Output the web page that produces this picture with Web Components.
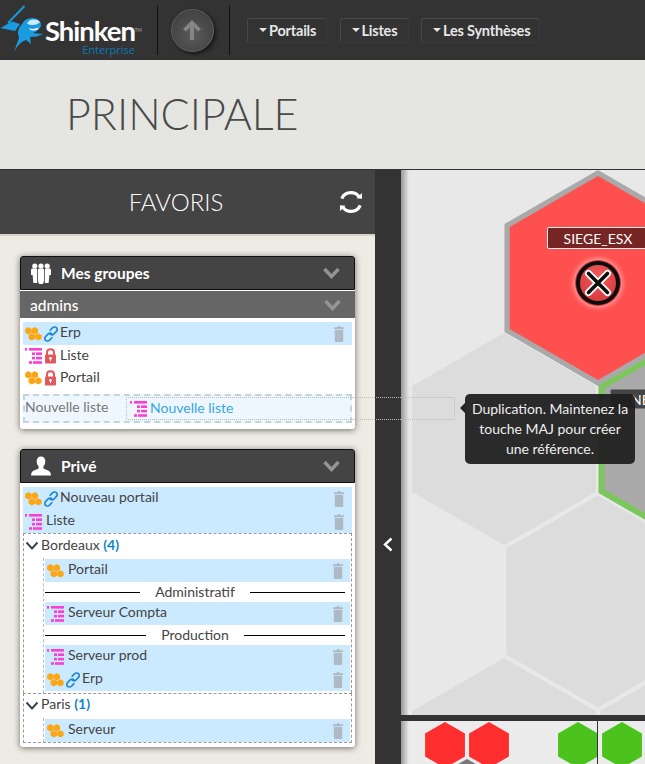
<!DOCTYPE html>
<html lang="fr">
<head>
<meta charset="utf-8">
<title>Shinken Enterprise</title>
<style>
    html, body { margin: 0; padding: 0; }
    body {
        width: 645px;
        height: 764px;
        overflow: hidden;
        position: relative;
        font-family: 'Lato', sans-serif;
        background: #333;
    }
</style>
</head>
<body>
<sk-topbar>
    <sk-nav-button width="80">Portails</sk-nav-button>
    <sk-nav-button width="69">Listes</sk-nav-button>
    <sk-nav-button width="119">Les Synthèses</sk-nav-button>
</sk-topbar>
<sk-title-band>PRINCIPALE</sk-title-band>
<sk-main>
    <sk-sidebar>
        <sk-panel title="Mes groupes" icon="group">
            <sk-subheader>admins</sk-subheader>
            <sk-list>
                <sk-item icons="portal link" selected trash>Erp</sk-item>
                <sk-item icons="list lock" short>Liste</sk-item>
                <sk-item icons="portal lock" short>Portail</sk-item>
                <sk-dropzone>Nouvelle liste</sk-dropzone>
            </sk-list>
        </sk-panel>
        <sk-panel title="Privé" icon="user">
            <sk-list>
                <sk-item icons="portal link" selected trash>Nouveau portail</sk-item>
                <sk-item icons="list" selected trash>Liste</sk-item>
                <sk-folder name="Bordeaux" count="4">
                    <sk-item icons="portal" selected trash nested>Portail</sk-item>
                    <sk-sep>Administratif</sk-sep>
                    <sk-item icons="list" selected trash nested>Serveur Compta</sk-item>
                    <sk-sep>Production</sk-sep>
                    <sk-item icons="list" selected trash nested>Serveur prod</sk-item>
                    <sk-item icons="portal link" selected trash nested>Erp</sk-item>
                </sk-folder>
                <sk-folder name="Paris" count="1">
                    <sk-item icons="portal" selected trash nested>Serveur</sk-item>
                </sk-folder>
            </sk-list>
        </sk-panel>
    </sk-sidebar>
    <sk-collapse-strip></sk-collapse-strip>
    <sk-map></sk-map>
</sk-main>
<sk-drag-ghost>Nouvelle liste</sk-drag-ghost>
<sk-tooltip>Duplication. Maintenez la touche MAJ pour créer une référence.</sk-tooltip>

<script>
function hexPoints(cx, cy, r) {
    const w = r * 0.866;
    return [[cx, cy - r], [cx + w, cy - r / 2], [cx + w, cy + r / 2], [cx, cy + r], [cx - w, cy + r / 2], [cx - w, cy - r / 2]]
        .map(p => p.join(',')).join(' ');
}

const ICONS = {
    portal: `<svg width="17" height="14" viewBox="0 0 17 14"><g fill="#fda614">${[[3.4, 3.8], [9.8, 3.8], [6.8, 9.9], [13.4, 9.9]].map(([x, y]) => `<polygon points="${hexPoints(x, y, 3.7)}"/>`).join('')}</g></svg>`,
    link: `<svg class="second" width="14" height="16" viewBox="0 0 14 16"><g fill="none" stroke="#1f8ad2" stroke-width="1.7" stroke-linecap="round"><path d="M6.2 4.3 L8.4 1.9 C9.7 .6 11.6 .8 12.6 1.9 C13.5 3 13.3 4.6 12.2 5.7 L9.8 8.1 C8.6 9.2 7 9 6.1 7.9"/><path d="M7.8 11.7 L5.6 14.1 C4.3 15.4 2.4 15.2 1.4 14.1 C.5 13 .7 11.4 1.8 10.3 L4.2 7.9 C5.4 6.8 7 7 7.9 8.1"/></g></svg>`,
    list: `<svg width="17" height="16" viewBox="0 0 17 16"><g fill="#fb3fd6"><rect x="0" y="0" width="2" height="2.6"/><rect x="4" y="0" width="13" height="2.6"/><rect x="7" y="4.4" width="3" height="2.6"/><rect x="11" y="4.4" width="6" height="2.6"/><rect x="7" y="8.8" width="3" height="2.6"/><rect x="11" y="8.8" width="6" height="2.6"/><rect x="4" y="13.2" width="3" height="2.6"/><rect x="8" y="13.2" width="9" height="2.6"/></g></svg>`,
    lock: `<svg class="second" width="14" height="16" viewBox="0 0 14 16"><path d="M3 7 V4.6 C3 2.4 4.4 1.2 6.5 1.2 C8.6 1.2 10 2.4 10 4.6 V7" fill="none" stroke="#e2585f" stroke-width="2"/><rect x="1" y="6.5" width="11" height="9" rx="1" fill="#e2585f"/><circle cx="6.5" cy="10.2" r="1.3" fill="#fff"/><rect x="6" y="10.4" width="1" height="2.6" fill="#fff"/></svg>`,
    trash: `<svg width="10" height="16" viewBox="0 0 10 16"><path d="M3.5 1.2 L4 0 H6 L6.5 1.2 H10 V3 H0 V1.2 Z M.8 3.8 H9.2 V15 Q9.2 16 8.2 16 H1.8 Q.8 16 .8 15 Z" fill="#adbac3"/></svg>`,
    chevron: `<svg width="17" height="12" viewBox="0 0 17 12"><path d="M1.5 2 L8.5 9.5 L15.5 2" fill="none" stroke="#949494" stroke-width="3.4"/></svg>`,
    group: `<svg width="20" height="21" viewBox="0 0 20 21" fill="#fff"><circle cx="3.8" cy="3" r="2.6"/><circle cx="10" cy="3" r="2.6"/><circle cx="16.2" cy="3" r="2.6"/><path d="M0 7 Q0 5.6 1.8 5.6 H5.4 L6.2 6.4 V20 H2.4 L1.6 12 H0 Z"/><path d="M7 6.2 Q7.6 5.6 8.6 5.6 H11.4 Q12.4 5.6 13 6.2 V18 L12 21 H8 L7 18 Z"/><path d="M20 7 Q20 5.6 18.2 5.6 H14.6 L13.8 6.4 V20 H17.6 L18.4 12 H20 Z"/></svg>`,
    user: `<svg width="21" height="20" viewBox="0 0 21 20" fill="#fff"><path d="M10.5 0 C13.6 0 15 2.2 15 5 C15 7.6 14 9.4 13 10.6 V12 C13.4 13 15.4 13.6 17.4 14.4 C19.6 15.2 20.8 16.4 21 20 H0 C.2 16.4 1.4 15.2 3.6 14.4 C5.6 13.6 7.6 13 8 12 V10.6 C7 9.4 6 7.6 6 5 C6 2.2 7.4 0 10.5 0 Z"/></svg>`,
    refresh: `<svg width="24" height="24" viewBox="0 0 24 24" fill="none" stroke="#fff" stroke-width="3.2"><path d="M2.8 8.6 C4.4 4.6 8 2.6 12 2.6 C15.4 2.6 18.4 4.2 20 6.6"/><path d="M21.2 15.4 C19.6 19.4 16 21.4 12 21.4 C8.6 21.4 5.6 19.8 4 17.4"/><path d="M17.4 8.2 L23 8.8 L23 3 Z" fill="#fff" stroke="none"/><path d="M6.6 15.8 L1 15.2 L1 21 Z" fill="#fff" stroke="none"/></svg>`
};

class SkTopbar extends HTMLElement {
    constructor() {
        super();
        this.attachShadow({ mode: 'open' });
    }
    connectedCallback() {
        this.shadowRoot.innerHTML = `
            <style>
                :host { display: flex; height: 60px; background: #333; align-items: center; }
                .logo { display: flex; width: 157px; height: 60px; flex: none; }
                .brand { display: flex; flex-direction: column; align-items: flex-end; width: 89px; padding-top: 19px; position: relative; }
                .name { font: 700 27.5px/24px 'Lato', sans-serif; color: #fff; letter-spacing: -1px; }
                .tm { font: 400 5px/6px 'Lato', sans-serif; color: #aaa; position: absolute; right: -7px; top: 27px; }
                .ent { font: 400 11px/12px 'Open Sans', sans-serif; color: #0d78b5; margin-top: 1px; }
                .sep { width: 1px; height: 50px; background: #111; flex: none; }
                .up { width: 71px; display: flex; justify-content: center; flex: none; }
                .circle {
                    width: 41px; height: 41px; border-radius: 50%; margin-right: 3px;
                    background: radial-gradient(circle at 50% 60%, #5a5a5a, #474747 60%, #3b3b3b);
                    border: 1px solid #5e5e5e;
                    box-shadow: 2px 2px 4px rgba(0,0,0,.6);
                    display: flex; align-items: center; justify-content: center;
                }
                nav { display: flex; gap: 12.5px; margin-left: 17px; }
            </style>
            <div class="logo">
                <svg width="46" height="60" viewBox="0 0 46 60">
                    <path d="M24.5 6 L8 23" stroke="#1a9be0" stroke-width="1.8"/>
                    <path d="M.5 28 L12 21.5 L20 24 L15 31 Z" fill="#1a9be0"/>
                    <path d="M14 52 L19 38 Q16 30 22 24 Q25 18 32 18 Q41 18 41 26 Q39 31 33 33 L43 34 L37 36.5 L30 37 L31 44 L26 40 Q19 42 14 52 Z" fill="#1a9be0"/>
                    <path d="M27 23.5 Q33 27 40 22.5 Q38.5 19.5 33.5 19.5 Q29 19.5 27 23.5 Z" fill="#cdeafa"/>
                    <path d="M29 28 Q33 30 38.5 27.5 L37.8 29.6 Q33 31.2 30 29.8 Z" fill="#fff"/>
                </svg>
                <div class="brand">
                    <span class="name">Shinken</span>
                    <span class="tm">TM</span>
                    <span class="ent">Enterprise</span>
                </div>
            </div>
            <div class="sep"></div>
            <div class="up">
                <div class="circle">
                    <svg width="20" height="22" viewBox="0 0 20 22"><path d="M10 1 L19 10 L16 12.6 L12 8.6 V21 H8 V8.6 L4 12.6 L1 10 Z" fill="#858585"/></svg>
                </div>
            </div>
            <div class="sep"></div>
            <nav><slot></slot></nav>
        `;
    }
}

class SkNavButton extends HTMLElement {
    constructor() {
        super();
        this.attachShadow({ mode: 'open' });
    }
    connectedCallback() {
        this.shadowRoot.innerHTML = `
            <style>
                :host {
                    display: flex; align-items: center; height: 25px; padding: 0 0 0 11px;
                    width: ${this.getAttribute('width')}px; flex: none;
                    border: 1px solid #484848; border-bottom-color: #3a3a3a; border-right-color: #3a3a3a;
                    border-radius: 3px; box-sizing: border-box;
                    color: #e6e6e6; font: 700 14.5px 'Lato', sans-serif; letter-spacing: -.2px;
                }
                i { width: 0; height: 0; border: 4.5px solid transparent; border-top: 4px solid #e6e6e6; border-bottom: 0; margin-right: 2px; }
            </style>
            <i></i><slot></slot>
        `;
    }
}

class SkTitleBand extends HTMLElement {
    constructor() {
        super();
        this.attachShadow({ mode: 'open' });
    }
    connectedCallback() {
        this.shadowRoot.innerHTML = `
            <style>
                :host {
                    display: flex; align-items: center; height: 110px; box-sizing: border-box;
                    padding: 0 0 2px 66px; background: #e5e6e1; border-bottom: 1px solid #333;
                    color: #4a4a4a; font: 300 43px 'Lato', sans-serif;
                }
            </style>
            <slot></slot>
        `;
    }
}

class SkMain extends HTMLElement {
    constructor() {
        super();
        this.attachShadow({ mode: 'open' });
    }
    connectedCallback() {
        this.shadowRoot.innerHTML = `
            <style>
                :host { display: flex; height: 594px; overflow: hidden; }
            </style>
            <slot></slot>
        `;
    }
}

class SkSidebar extends HTMLElement {
    constructor() {
        super();
        this.attachShadow({ mode: 'open' });
    }
    connectedCallback() {
        this.shadowRoot.innerHTML = `
            <style>
                :host { display: block; width: 375px; flex: none; background: #eeebe4; }
                header {
                    height: 66px; box-sizing: border-box; background: #444; border-bottom: 2px solid #d4d3cd;
                    display: flex; align-items: center; justify-content: center; position: relative;
                    color: #fff; font: 300 24px 'Lato', sans-serif; padding: 0 23px 1px 0;
                }
                .refresh { position: absolute; left: 339px; top: 20px; line-height: 0; }
                .panels { display: flex; flex-direction: column; gap: 20px; padding: 20px 20px 0; }
            </style>
            <header>FAVORIS<span class="refresh">${ICONS.refresh}</span></header>
            <div class="panels"><slot></slot></div>
        `;
    }
}

class SkPanel extends HTMLElement {
    constructor() {
        super();
        this.attachShadow({ mode: 'open' });
    }
    connectedCallback() {
        const title = this.getAttribute('title') || '';
        const icon = this.getAttribute('icon') || 'user';
        this.shadowRoot.innerHTML = `
            <style>
                :host {
                    display: block; background: #fff; border-radius: 3px;
                    box-shadow: 0 1px 6px rgba(0,0,0,.55);
                }
                header {
                    height: 34px; box-sizing: border-box; background: #444; border: 1px solid #111; border-radius: 3px 3px 0 0;
                    display: flex; align-items: center; color: #fff; font: 700 15.5px 'Lato', sans-serif;
                }
                .ic { width: 20px; margin-left: 10px; margin-right: 10px; display: flex; justify-content: center; line-height: 0; }
                .t { flex: 1; }
                .ch { margin-right: 14px; line-height: 0; }
            </style>
            <header>
                <span class="ic">${ICONS[icon]}</span>
                <span class="t">${title}</span>
                <span class="ch">${ICONS.chevron}</span>
            </header>
            <slot></slot>
        `;
    }
}

class SkSubheader extends HTMLElement {
    constructor() {
        super();
        this.attachShadow({ mode: 'open' });
    }
    connectedCallback() {
        this.shadowRoot.innerHTML = `
            <style>
                :host {
                    display: flex; align-items: center; justify-content: space-between; height: 27px;
                    margin-top: 1px; padding: 0 14px 0 10px; background: #666; color: #fff;
                    font: 500 15.5px 'Lato', sans-serif;
                }
                span { line-height: 0; }
            </style>
            <slot></slot><span>${ICONS.chevron}</span>
        `;
    }
}

class SkList extends HTMLElement {
    constructor() {
        super();
        this.attachShadow({ mode: 'open' });
    }
    connectedCallback() {
        this.shadowRoot.innerHTML = `
            <style>
                :host { display: block; padding: 4px 3px; }
            </style>
            <slot></slot>
        `;
    }
}

class SkItem extends HTMLElement {
    constructor() {
        super();
        this.attachShadow({ mode: 'open' });
    }
    connectedCallback() {
        const icons = (this.getAttribute('icons') || '').split(' ').filter(Boolean);
        const trash = this.hasAttribute('trash');
        const nested = this.hasAttribute('nested');
        this.shadowRoot.innerHTML = `
            <style>
                :host {
                    display: flex; align-items: center; height: ${this.hasAttribute('short') ? 22 : 23}px;
                    padding: 0 ${nested ? 7 : 8}px 0 2px; margin-right: ${nested ? 1 : 0}px;
                    color: #444; font: 400 14px 'Lato', sans-serif;
                    background: ${this.hasAttribute('selected') ? '#cceaff' : 'transparent'};
                }
                .icons { display: flex; align-items: center; margin-right: 4px; line-height: 0; }
                .second { margin: 0 -2px 0 2px; }
                .label { flex: 1; white-space: nowrap; padding-bottom: 4px; }
                .trash { line-height: 0; }
            </style>
            <span class="icons">${icons.map(i => ICONS[i]).join('')}</span>
            <span class="label"><slot></slot></span>
            ${trash ? `<span class="trash">${ICONS.trash}</span>` : ''}
        `;
    }
}

class SkDropzone extends HTMLElement {
    constructor() {
        super();
        this.attachShadow({ mode: 'open' });
    }
    connectedCallback() {
        this.shadowRoot.innerHTML = `
            <style>
                :host {
                    display: flex; align-items: center; height: 29px; box-sizing: border-box; margin-top: 5px; margin-bottom: 2px;
                    padding: 0 0 4px 0; background: #eef7fe; border: 2px dashed #c3d5dc;
                    color: #777; font: 400 14px 'Lato', sans-serif;
                }
            </style>
            <slot></slot>
        `;
    }
}

class SkFolder extends HTMLElement {
    constructor() {
        super();
        this.attachShadow({ mode: 'open' });
    }
    connectedCallback() {
        this.shadowRoot.innerHTML = `
            <style>
                :host { display: block; border: 1px dashed #999; border-bottom: 0; box-sizing: border-box; }
                :host(:last-child) { border-bottom: 1px dashed #999; }
                .head {
                    display: flex; align-items: center; height: 24px; padding-left: 1px; gap: 2px;
                    color: #444; font: 400 14px 'Lato', sans-serif;
                }
                .head svg { flex: none; }
                .head span { padding-bottom: 4px; }
                :host(:last-child) .head span { padding-bottom: 6px; }
                b { color: #0d86c9; font-weight: 700; }
                .kids { margin-left: 19px; padding: 1px 0 2px 1px; border-left: 1px dashed #bbb; }
                :host(:last-child) .kids { padding-bottom: 0; }
            </style>
            <div class="head">
                <svg width="14" height="10" viewBox="0 0 14 10"><path d="M1.5 1.5 L7 7.5 L12.5 1.5" fill="none" stroke="#3a4654" stroke-width="2"/></svg>
                <span>${this.getAttribute('name')} <b>(${this.getAttribute('count')})</b></span>
            </div>
            <div class="kids"><slot></slot></div>
        `;
    }
}

class SkSep extends HTMLElement {
    constructor() {
        super();
        this.attachShadow({ mode: 'open' });
    }
    connectedCallback() {
        this.shadowRoot.innerHTML = `
            <style>
                :host {
                    display: flex; align-items: center; height: 20px; gap: 15px; padding-right: 5px; margin-right: 1px;
                    color: #444; font: 400 14px 'Lato', sans-serif;
                }
                i { flex: 1; height: 1px; background: #000; }
                span { padding-bottom: 2px; }
            </style>
            <i></i><span><slot></slot></span><i></i>
        `;
    }
}

class SkCollapseStrip extends HTMLElement {
    constructor() {
        super();
        this.attachShadow({ mode: 'open' });
    }
    connectedCallback() {
        this.shadowRoot.innerHTML = `
            <style>
                :host { display: flex; width: 26px; flex: none; background: #333; justify-content: center; padding-top: 367px; box-sizing: border-box; }
                svg { display: block; }
            </style>
            <svg width="12" height="15" viewBox="0 0 12 15"><path d="M9.5 1.5 L3 7.5 L9.5 13.5" fill="none" stroke="#fff" stroke-width="2.4"/></svg>
        `;
    }
}

class SkMap extends HTMLElement {
    constructor() {
        super();
        this.attachShadow({ mode: 'open' });
    }
    connectedCallback() {
        const grey = [[504, 439], [598, 601.5], [504, 764], [692, 764]]
            .map(([x, y]) => `<polygon points="${hexPoints(x, y, 106)}" fill="#dcdcdc"/>`).join('');
        const mini = [[445, 745, '#ff2e2e'], [489, 745, '#ff2e2e'], [578, 745, '#4cc31c'], [622, 745, '#4cc31c'], [467, 782, '#777']]
            .map(([x, y, c]) => `<polygon points="${hexPoints(x, y, 23)}" fill="${c}"/>`).join('');
        this.shadowRoot.innerHTML = `
            <style>
                :host { display: flex; flex-direction: column; width: 244px; flex: none; background: #333; }
                .stage { position: relative; height: 545px; background: #e8e8e8; overflow: hidden; }
                .stage svg, .mini svg { display: block; }
                .mini { position: relative; height: 43px; margin-top: 6px; background: #ececec; }
                .shade { position: absolute; left: 0; top: 0; bottom: 0; width: 8px; background: linear-gradient(to right, #999, rgba(232,232,232,0)); }
                .label {
                    position: absolute; height: 22px; box-sizing: border-box; border: 1px solid #eee; border-radius: 2px;
                    display: flex; align-items: center; justify-content: center;
                    color: #fff; font: 400 14px 'Lato', sans-serif;
                }
                .siege { left: 146px; top: 57px; width: 102px; background: #752524; }
                .ne { left: 209px; top: 219px; width: 76px; height: 20px; background: #444; border-color: #777; justify-content: flex-start; padding-left: 20px; }
            </style>
            <div class="stage">
                <svg width="244" height="545" viewBox="401 170 244 545">
                    <defs>
                        <radialGradient id="core" cx="50%" cy="30%" r="70%"><stop offset="0" stop-color="#ee5a5c"/><stop offset="1" stop-color="#d93a3c"/></radialGradient>
                        <radialGradient id="glow"><stop offset=".7" stop-color="#ffc4c4" stop-opacity=".9"/><stop offset="1" stop-color="#ff5050" stop-opacity="0"/></radialGradient>
                    </defs>
                    ${grey}
                    <polygon points="${hexPoints(692, 439, 108)}" fill="#7cc75c"/>
                    <polygon points="${hexPoints(692, 439, 101)}" fill="#a9a9a9"/>
                    <polygon points="${hexPoints(598, 278, 108)}" fill="#a9a9a9"/>
                    <polygon points="${hexPoints(598, 278, 102)}" fill="#ff5050"/>
                    <circle cx="598" cy="283" r="30" fill="url(#glow)"/>
                    <circle cx="598" cy="283" r="23" fill="#c63a3c"/>
                    <circle cx="598" cy="283" r="22" fill="#0d0d0d"/>
                    <circle cx="598" cy="283" r="18" fill="url(#core)"/>
                    <path d="M588.5 273.5 L607.5 292.5 M607.5 273.5 L588.5 292.5" stroke="#fff" stroke-width="7" stroke-linecap="round"/>
                    <path d="M588.5 273.5 L607.5 292.5 M607.5 273.5 L588.5 292.5" stroke="#0d0d0d" stroke-width="3.6" stroke-linecap="round"/>
                </svg>
                <div class="label siege">SIEGE_ESX</div>
                <div class="label ne">NE</div>
                <div class="shade"></div>
            </div>
            <div class="mini">
                <svg width="244" height="43" viewBox="401 721 244 43">
                    ${mini}
                    <rect x="597" y="721" width="1" height="43" fill="#333"/>
                </svg>
                <div class="shade"></div>
            </div>
        `;
    }
}

class SkDragGhost extends HTMLElement {
    constructor() {
        super();
        this.attachShadow({ mode: 'open' });
    }
    connectedCallback() {
        this.shadowRoot.innerHTML = `
            <style>
                :host {
                    position: absolute; left: 126px; top: 397px; width: 329px; height: 23px; box-sizing: border-box;
                    display: flex; align-items: center; gap: 3px; padding-left: 3px;
                    border: 1px dotted #bbb; color: #3aa5e2; font: 400 14px 'Lato', sans-serif;
                }
                span { line-height: 0; }
                b { font-weight: 400; padding-bottom: 2px; }
            </style>
            <span>${ICONS.list}</span><b><slot></slot></b>
        `;
    }
}

class SkTooltip extends HTMLElement {
    constructor() {
        super();
        this.attachShadow({ mode: 'open' });
    }
    connectedCallback() {
        this.shadowRoot.innerHTML = `
            <style>
                :host {
                    position: absolute; left: 465px; top: 394px; width: 170px; height: 70px; box-sizing: border-box;
                    padding: 5px 5px; background: rgba(32,32,32,.95); border-radius: 5px;
                    color: #eee; font: 400 14px/20px 'Lato', sans-serif; text-align: center;
                }
                i {
                    position: absolute; left: -5px; top: 9px; width: 0; height: 0;
                    border-style: solid; border-width: 5px 5px 5px 0; border-color: transparent #222 transparent transparent;
                }
            </style>
            <i></i><slot></slot>
        `;
    }
}

customElements.define('sk-topbar', SkTopbar);
customElements.define('sk-nav-button', SkNavButton);
customElements.define('sk-title-band', SkTitleBand);
customElements.define('sk-main', SkMain);
customElements.define('sk-sidebar', SkSidebar);
customElements.define('sk-panel', SkPanel);
customElements.define('sk-subheader', SkSubheader);
customElements.define('sk-list', SkList);
customElements.define('sk-item', SkItem);
customElements.define('sk-dropzone', SkDropzone);
customElements.define('sk-folder', SkFolder);
customElements.define('sk-sep', SkSep);
customElements.define('sk-collapse-strip', SkCollapseStrip);
customElements.define('sk-map', SkMap);
customElements.define('sk-drag-ghost', SkDragGhost);
customElements.define('sk-tooltip', SkTooltip);
</script>
</body>
</html>
